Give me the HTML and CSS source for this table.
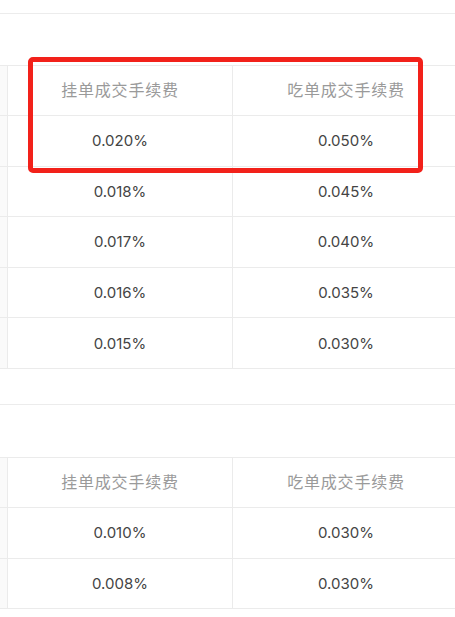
FILE: index.html
```html
<!DOCTYPE html>
<html lang="zh">
<head>
<meta charset="utf-8">
<link rel="stylesheet" href="styles.css">
</head>
<body>
<div class="page">
  <div class="top-space"></div>
  <section class="section">
    <div class="fee-table highlighted">
      <div class="row head">
        <div class="cell edge"></div>
        <div class="cell">挂单成交手续费</div>
        <div class="cell">吃单成交手续费</div>
      </div>
      <div class="row"><div class="cell edge"></div><div class="cell">0.020%</div><div class="cell">0.050%</div></div>
      <div class="row"><div class="cell edge"></div><div class="cell">0.018%</div><div class="cell">0.045%</div></div>
      <div class="row"><div class="cell edge"></div><div class="cell">0.017%</div><div class="cell">0.040%</div></div>
      <div class="row"><div class="cell edge"></div><div class="cell">0.016%</div><div class="cell">0.035%</div></div>
      <div class="row"><div class="cell edge"></div><div class="cell">0.015%</div><div class="cell">0.030%</div></div>
      <div class="highlight-box"></div>
    </div>
  </section>
  <section class="section">
    <div class="fee-table">
      <div class="row head">
        <div class="cell edge"></div>
        <div class="cell">挂单成交手续费</div>
        <div class="cell">吃单成交手续费</div>
      </div>
      <div class="row"><div class="cell edge"></div><div class="cell">0.010%</div><div class="cell">0.030%</div></div>
      <div class="row"><div class="cell edge"></div><div class="cell">0.008%</div><div class="cell">0.030%</div></div>
    </div>
  </section>
</div>
</body>
</html>
```
FILE: styles.css
```css
html, body {
  margin: 0;
  padding: 0;
  background: #ffffff;
  overflow: hidden;
}
.page {
  width: 455px;
  height: 617px;
  overflow: hidden;
}
.top-space {
  height: 13px;
}
.section {
  border-top: 1px solid #ececec;
  padding-top: 51px;
  padding-bottom: 35px;
}
.section + .section {
  padding-top: 52px;
}
.fee-table {
  position: relative;
  width: 460px;
  border-top: 1px solid #ebebeb;
}
.row {
  display: grid;
  grid-template-columns: 8px 225px 227px;
  height: 50.6px;
  box-sizing: border-box;
  border-bottom: 1px solid #ebebeb;
}
.row.head {
  height: 50px;
}
.cell {
  display: flex;
  align-items: center;
  justify-content: center;
  border-right: 1px solid #ebebeb;
  font-family: Inter, "Liberation Sans", sans-serif;
  font-size: 15px;
  color: #444444;
}
.cell.edge {
  background: #fafafa;
}
.row.head .cell {
  font-family: "Noto Sans CJK SC", "Noto Sans", sans-serif;
  font-size: 16px;
  letter-spacing: 0.8px;
  color: #9a9a9a;
  padding-bottom: 3px;
}
.highlight-box {
  position: absolute;
  left: 28px;
  top: -9px;
  width: 395px;
  height: 116px;
  box-sizing: border-box;
  border: 5px solid #f2211a;
  border-radius: 5px;
}
```
